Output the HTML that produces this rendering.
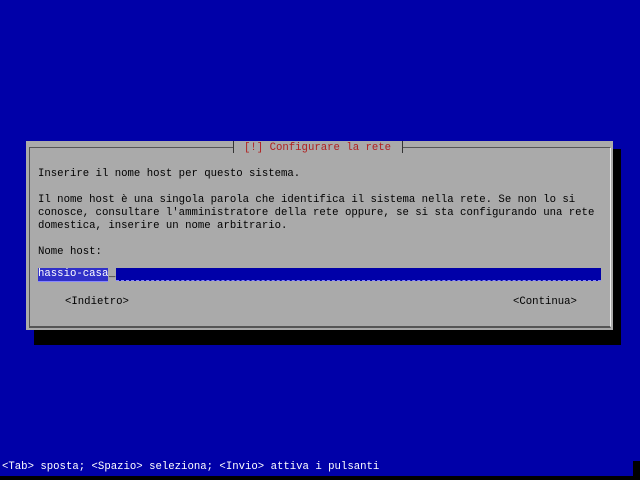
<!DOCTYPE html>
<html><head><meta charset="utf-8"><style>
body{margin:0;width:640px;height:480px;background:#0000a8;position:relative;overflow:hidden;font-family:"Liberation Mono",monospace;font-size:10.67px;}
div{position:absolute;white-space:pre;line-height:13px;}
.t{color:#000;}
</style></head><body>
<div style="left:34px;top:330px;width:587px;height:15px;background:#000"></div>
<div style="left:613px;top:149px;width:8px;height:196px;background:#000"></div>
<div style="left:26px;top:141px;width:587px;height:189px;background:#aaa"></div>
<div style="left:29px;top:147px;width:580px;height:178px;border-top:1px solid #555;border-left:1px solid #555;border-right:1px solid #eee;border-bottom:2px solid #555"></div>
<div style="left:233px;top:141px;width:168px;height:12px;background:#aaa;border-left:1px solid #333;border-right:1px solid #333"></div>
<div style="left:244px;top:142px;color:#b02020">[!] Configurare la rete</div>
<div class="t" style="left:38px;top:168px">Inserire il nome host per questo sistema.</div>
<div class="t" style="left:38px;top:194px">Il nome host è una singola parola che identifica il sistema nella rete. Se non lo si
conosce, consultare l'amministratore della rete oppure, se si sta configurando una rete
domestica, inserire un nome arbitrario.</div>
<div class="t" style="left:38px;top:246px">Nome host:</div>
<div style="left:116px;top:268px;width:485px;height:13px;background:#0000a8;border-bottom:1px dashed #8888ff;box-sizing:border-box"></div>
<div style="left:38px;top:268px;height:13px;background:#3030c8;color:#fff;border-bottom:1px solid #8888ff">hassio-casa</div>
<div style="left:109px;top:268px;color:#000">_</div>
<div class="t" style="left:65px;top:296px">&lt;Indietro&gt;</div>
<div class="t" style="left:513px;top:296px">&lt;Continua&gt;</div>
<div style="left:2px;top:461px;color:#fff">&lt;Tab&gt; sposta; &lt;Spazio&gt; seleziona; &lt;Invio&gt; attiva i pulsanti</div>
<div style="left:0;top:476px;width:640px;height:4px;background:#000"></div>
<div style="left:633px;top:461px;width:7px;height:19px;background:#000"></div>
</body></html>
